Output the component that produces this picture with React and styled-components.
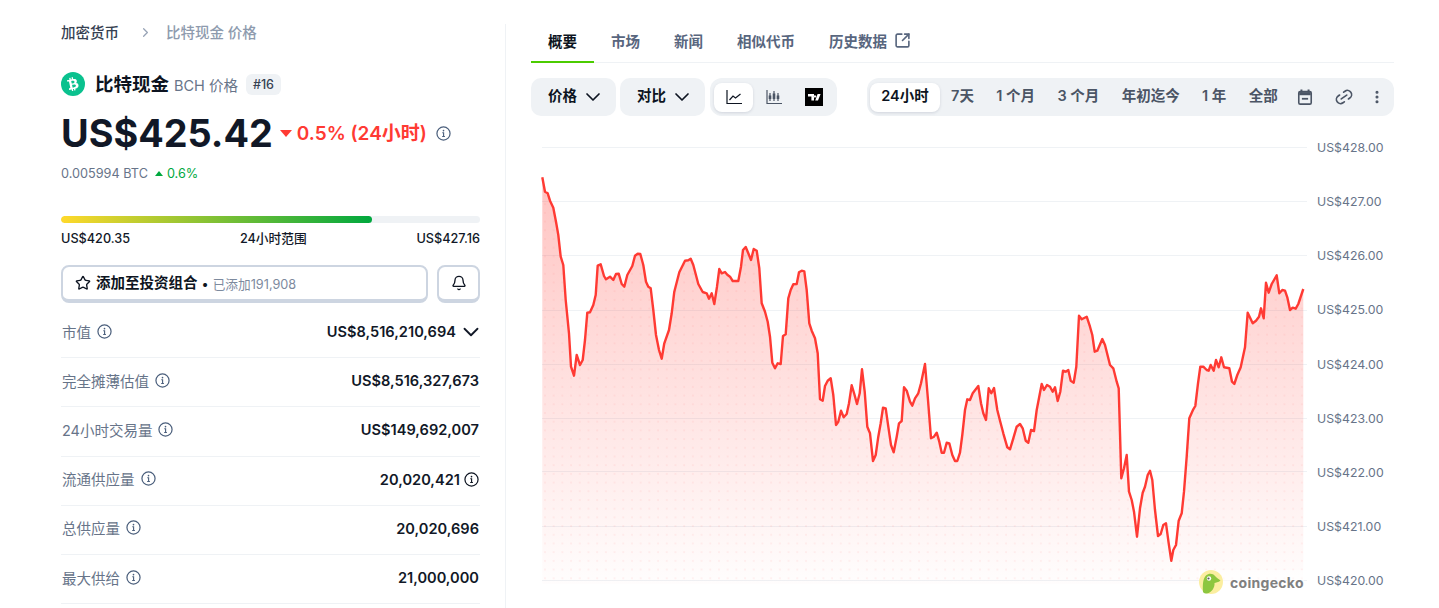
import React from "react";
import styled, { createGlobalStyle } from "styled-components";
import { Bell, ChevronDown, ChevronRight, Link2, MoreVertical, SquareArrowOutUpRight, Star } from "lucide-react";
import { FaBtc } from "react-icons/fa";

const GlobalStyle = createGlobalStyle`
  html, body {
    margin: 0;
    padding: 0;
    background: #fff;
    overflow: hidden;
  }
  body {
    font-family: Inter, "Noto Sans CJK SC", sans-serif;
    color: #0d1421;
  }
  * { box-sizing: border-box; }
`;

const Page = styled.div`
  height: 608px;
  padding: 24px 45px 0 61px;
  display: flex;
  overflow: hidden;
`;

const Sidebar = styled.aside`
  width: 445px;
  padding-right: 25px;
  border-right: 1px solid #eff2f5;
  flex-shrink: 0;
`;

const Main = styled.main`
  flex: 1;
  min-width: 0;
  padding-left: 25px;
`;

const Breadcrumb = styled.nav`
  display: flex;
  align-items: center;
  height: 16px;
  padding-bottom: 2px;
  font-size: 14.5px;
  font-weight: 500;
`;

const Crumb = styled.span`
  color: ${(p) => (p.$current ? "#8e9bae" : "#364152")};
`;

const CrumbSep = styled(ChevronRight)`
  width: 15px;
  height: 15px;
  margin: 2px 13px 0 19px;
  color: #97a3b6;
`;

const TitleRow = styled.div`
  display: flex;
  align-items: center;
  height: 24px;
  margin-top: 32px;
`;

const CoinLogo = styled.span`
  width: 24px;
  height: 24px;
  border-radius: 50%;
  background: #0ac18e;
  color: #fff;
  display: flex;
  align-items: center;
  justify-content: center;
  margin-right: 10px;

  svg {
    width: 12px;
    height: 14px;
    transform: rotate(-12deg);
  }
`;

const CoinName = styled.h1`
  margin: 0 0 2px;
  font-size: 18.5px;
  font-weight: 700;
  color: #0d1421;
`;

const CoinSymbol = styled.span`
  font-size: 14.5px;
  color: #677489;
  margin-left: 5px;
`;

const RankBadge = styled.span`
  font-size: 12.5px;
  font-weight: 500;
  color: #364152;
  background: #eff2f5;
  border-radius: 6px;
  padding: 2px 7px;
  line-height: 17px;
  margin-left: 8px;
`;

const PriceRow = styled.div`
  display: flex;
  align-items: center;
  height: 44px;
  margin-top: 15px;
`;

const Price = styled.span`
  font-size: 37.8px;
  font-weight: 700;
  color: #111827;
`;

const DownCaret = styled.span`
  width: 0;
  height: 0;
  margin: 0 5px 0 7px;
  border-left: 6px solid transparent;
  border-right: 6px solid transparent;
  border-top: 7px solid #ff3a33;
`;

const Change = styled.span`
  font-size: 19px;
  font-weight: 600;
  color: #ff3a33;
  margin: 0 9px 4px 0;
`;

const BtcRow = styled.div`
  display: flex;
  align-items: center;
  height: 20px;
  margin-top: 8px;
  font-size: 12.7px;
  color: #677489;
`;

const UpCaret = styled.span`
  width: 0;
  height: 0;
  margin: 0 4px 0 7px;
  border-left: 4px solid transparent;
  border-right: 4px solid transparent;
  border-bottom: 5px solid #00a83e;
`;

const BtcChange = styled.span`
  color: #00a83e;
`;

const RangeTrack = styled.div`
  height: 7px;
  margin-top: 33px;
  background: #eff2f5;
  border-radius: 4px;
  overflow: hidden;
`;

const RangeFill = styled.div`
  height: 100%;
  width: 74.2%;
  border-radius: 4px;
  background: linear-gradient(90deg, #ffd92b, #00a83e);
`;

const RangeLabels = styled.div`
  display: flex;
  justify-content: space-between;
  height: 16px;
  line-height: 16px;
  margin-top: 8px;
  font-size: 12.7px;
  font-weight: 500;
  color: #111827;
`;

const Actions = styled.div`
  display: flex;
  gap: 9px;
  margin-top: 18px;
`;

const OutlineButton = styled.button`
  height: 38px;
  padding: 0 ${(p) => (p.$square ? "0" : "12px")};
  width: ${(p) => (p.$square ? "43px" : "auto")};
  flex: ${(p) => (p.$square ? "none" : "1")};
  display: flex;
  align-items: center;
  justify-content: ${(p) => (p.$square ? "center" : "flex-start")};
  background: #fff;
  border: 2px solid #cdd5e1;
  border-bottom-width: 4px;
  border-radius: 8px;
  font-family: inherit;
  color: #0d1421;

  svg {
    width: 16px;
    height: 16px;
  }
`;

const AddText = styled.span`
  font-size: 14.5px;
  font-weight: 700;
  margin-left: 5px;
  padding-bottom: 3px;
`;

const AddCount = styled.span`
  font-size: 12.7px;
  color: #7d8a9e;
  margin-left: 4px;

  &::before {
    content: "•";
    color: #0d1421;
    margin-right: 4px;
  }
`;

const StatRow = styled.div`
  height: 49.2px;
  display: flex;
  align-items: center;
  justify-content: space-between;
  border-bottom: 1px solid #eff2f5;
  padding: 0 1px 2px;
  margin-top: ${(p) => (p.$first ? "6px" : "0")};
`;

const StatLabel = styled.span`
  display: flex;
  align-items: center;
  gap: 6px;
  padding-bottom: 2px;
  font-size: 14.5px;
  color: #677489;
`;

const StatValue = styled.span`
  display: flex;
  align-items: center;
  gap: 4px;
  font-size: 14.6px;
  font-weight: 600;
  color: #111827;
`;

const ValueChevron = styled(ChevronDown)`
  width: 26px;
  height: 26px;
  margin: 0 -5px 0 -2px;
  stroke-width: 1.7;
`;

const InfoSvg = styled.svg`
  width: 15px;
  height: 15px;
  flex-shrink: 0;
  color: ${(p) => p.$color || "#4b5f7c"};
`;

const InfoIcon = ({ color }) => (
  <InfoSvg viewBox="0 0 16 16" fill="none" $color={color}>
    <circle cx="8" cy="8" r="7" stroke="currentColor" strokeWidth="1.3" />
    <circle cx="8" cy="4.9" r="0.9" fill="currentColor" />
    <path d="M6.7 7.2H8.1V11M6.6 11.2H9.5" stroke="currentColor" strokeWidth="1.2" />
  </InfoSvg>
);

const Tabs = styled.div`
  display: flex;
  height: 39px;
  border-bottom: 1px solid #eff2f5;
`;

const Tab = styled.a`
  display: flex;
  align-items: center;
  gap: 7px;
  height: 39px;
  padding: 0 17px 4px;
  font-size: 14.5px;
  font-weight: 600;
  color: ${(p) => (p.$active ? "#0d1421" : "#58667e")};
  border-bottom: 2px solid ${(p) => (p.$active ? "#4bcc00" : "transparent")};

  svg {
    width: 17px;
    height: 17px;
    stroke-width: 2.3;
  }
`;

const Toolbar = styled.div`
  display: flex;
  margin-top: 15px;
`;

const SelectButton = styled.button`
  width: 85px;
  height: 38px;
  margin-right: 4px;
  padding: 0 0 6px;
  border: 0;
  border-radius: 10px;
  background: #eff2f5;
  display: flex;
  align-items: center;
  justify-content: center;
  gap: 10px;
  font-family: inherit;
  font-size: 14.5px;
  font-weight: 600;
  color: #0d1421;

  svg {
    width: 24px;
    height: 24px;
    margin: 6px -6px 0;
    stroke-width: 1.7;
  }
`;

const Segment = styled.div`
  height: 38px;
  padding: 4px;
  border-radius: 12px;
  background: #eff2f5;
  display: flex;
  align-items: center;
`;

const ChartSegment = styled(Segment)`
  width: 127px;
  margin-left: 1px;
  margin-right: 30px;
`;

const RangeSegment = styled(Segment)`
  flex: 1;
  padding-left: 3px;
`;

const SegmentItem = styled.button`
  height: 29px;
  padding: 0 11.2px 6px;
  border: 0;
  border-radius: 8px;
  background: ${(p) => (p.$active ? "#fff" : "transparent")};
  box-shadow: ${(p) => (p.$active ? "0 1px 3px rgba(88, 102, 126, 0.2)" : "none")};
  display: flex;
  align-items: center;
  justify-content: center;
  font-family: inherit;
  font-size: 14.5px;
  font-weight: 600;
  white-space: nowrap;
  color: ${(p) => (p.$active ? "#0d1421" : "#4b5565")};
`;

const GlyphButton = styled(SegmentItem)`
  padding: 0;
  width: ${(p) => p.$w};
  flex-shrink: 0;
`;

const ToolSvg = styled.svg`
  width: ${(p) => p.$size || "18px"};
  height: ${(p) => p.$size || "18px"};
`;

const LinkIcon = styled(Link2)`
  width: 20px;
  height: 20px;
  margin-left: 3px;
  transform: rotate(-35deg);
`;

const MoreIcon = styled(MoreVertical)`
  width: 16px;
  height: 16px;
  margin-left: 3px;
  stroke-width: 2.6;
`;

const ChartArea = styled.div`
  position: relative;
  display: flex;
  height: 449px;
  margin-top: 23px;
`;

const ChartSvg = styled.svg`
  width: 776px;
  height: 449px;
  flex-shrink: 0;
`;

const Axis = styled.div`
  flex: 1;
  padding-left: 10px;
  display: flex;
  flex-direction: column;
  justify-content: space-between;
`;

const AxisLabel = styled.span`
  height: 16px;
  line-height: 16px;
  font-size: 12.3px;
  padding-top: 1px;
  color: #677489;
`;

const Watermark = styled.div`
  position: absolute;
  left: 668px;
  top: 431px;
  display: flex;
  align-items: center;
  gap: 7px;
  background: rgba(255, 255, 255, 0.55);
`;

const GeckoSvg = styled.svg`
  width: 24px;
  height: 24px;
`;

const WatermarkText = styled.span`
  font-size: 14px;
  font-weight: 700;
  letter-spacing: 0.3px;
  color: #808080;
`;

const stats = [
  { label: "市值", value: "US$8,516,210,694", chevron: true },
  { label: "完全摊薄估值", value: "US$8,516,327,673" },
  { label: "24小时交易量", value: "US$149,692,007" },
  { label: "流通供应量", value: "20,020,421", info: true },
  { label: "总供应量", value: "20,020,696" },
  { label: "最大供给", value: "21,000,000" },
];

const axisLabels = ["428", "427", "426", "425", "424", "423", "422", "421", "420"];
const gridYs = [147, 201, 255, 310, 364, 418, 471, 526, 580];

// sampled off the reference, 3x scale, one list per crop
const samplesA = [
  22,112, 30,155, 38,160, 45,182, 55,203, 63,245, 70,285, 77,350, 85,375, 92,480, 102,580, 108,680,
  117,707, 125,645, 135,675, 143,660, 150,600, 157,518, 165,517, 175,495, 182,465, 188,377, 197,373,
  207,408, 213,418, 225,410, 235,420, 243,402, 251,401, 260,432, 268,440, 277,405, 292,378, 300,347,
  308,341, 316,342, 325,375, 333,425, 340,440, 347,445, 355,510, 363,585, 372,630, 380,656, 388,610,
  402,570, 410,520, 418,455, 433,397, 450,362, 460,361, 467,356, 475,375, 490,432, 503,456, 515,460,
  522,476, 530,460, 538,492, 546,440, 553,387, 560,400, 570,396, 577,404, 585,410, 593,423, 610,423,
  618,380, 624,330, 632,321, 640,340, 648,360, 656,327, 665,332, 673,385, 680,490, 690,515, 698,545,
  705,590, 712,668, 720,685, 728,670, 737,672, 744,588, 752,583, 760,475, 767,450, 775,433, 785,432,
  792,397, 800,392, 808,394, 815,450, 823,550, 830,572, 840,595, 848,640, 855,778, 863,782, 870,738,
  878,722, 887,715, 895,765, 903,855, 910,845, 918,812, 926,832, 935,822, 942,790, 950,736, 958,762,
  966,792, 974,760, 981,688, 989,755, 997,860, 1005,880, 1014,963, 1022,945, 1030,890, 1037,850,
  1044,803, 1052,805, 1060,860, 1068,915, 1076,937, 1085,890, 1092,850, 1100,843, 1107,742, 1115,752,
  1125,785, 1132,797, 1140,775, 1150,760, 1158,730, 1170,672,
];

const samplesB = [
  24,420, 33,535, 42,530, 50,518, 58,545, 65,578, 72,578, 80,548, 88,550, 97,585, 105,603, 112,603,
  120,578, 127,525, 135,450, 142,418, 150,420, 158,400, 175,378, 183,430, 190,460, 198,480, 206,385,
  214,400, 222,384, 232,450, 240,482, 250,520, 262,562, 270,568, 280,535, 290,500, 300,492, 308,505,
  317,542, 325,548, 333,510, 342,513, 350,450, 365,372, 372,390, 381,375, 390,380, 398,395, 405,382,
  413,423, 421,395, 429,332, 437,335, 445,330, 452,362, 461,368, 469,320, 477,167, 485,178, 500,170,
  510,200, 517,225, 524,275, 532,272, 547,237, 555,255, 570,315, 580,325, 590,365, 596,385, 600,520,
  604,655, 612,625, 620,585, 627,695, 635,720, 642,755, 651,830, 660,745, 668,698, 675,680, 683,645,
  690,632, 697,660, 705,750, 714,828, 722,822, 730,795, 738,790, 746,850, 754,902, 760,870, 768,855,
  776,782, 785,760, 792,695, 800,590, 808,475, 820,448, 826,438, 834,370, 841,320, 850,320, 860,330,
  866,332, 872,315, 881,332, 888,300, 896,322, 904,292, 912,322, 928,325, 936,365, 943,372, 952,345,
  962,322, 975,262, 983,158, 998,190, 1008,182, 1017,170, 1023,145, 1031,175, 1038,68, 1046,98, 1055,72,
  1070,46, 1078,100, 1087,90, 1095,92, 1102,112, 1110,150, 1118,143, 1127,146, 1135,132, 1150,87,
];

const toPoints = (list, ox, oy) => {
  const out = [];
  for (let i = 0; i < list.length; i += 2) {
    out.push(`${(ox + list[i] / 3).toFixed(1)},${(oy + list[i + 1] / 3).toFixed(1)}`);
  }
  return out;
};

const linePoints = [...toPoints(samplesA, 535, 140), ...toPoints(samplesB, 920, 260)];
const areaPoints = [...linePoints, "1303.3,584", "542.3,584"];

const PriceChart = () => (
  <ChartSvg viewBox="531 139 776 449">
    <defs>
      <linearGradient id="areaFade" x1="0" y1="177" x2="0" y2="584" gradientUnits="userSpaceOnUse">
        <stop offset="0" stopColor="#ff3a33" stopOpacity="0.3" />
        <stop offset="1" stopColor="#ff3a33" stopOpacity="0.01" />
      </linearGradient>
      <pattern id="areaDots" x="543" y="150" width="8.7" height="8.7" patternUnits="userSpaceOnUse">
        <circle cx="2" cy="2" r="1.1" fill="#ff3a33" fillOpacity="0.07" />
      </pattern>
    </defs>
    {gridYs.map((y) => (
      <line key={y} x1="542" x2="1307" y1={y + 0.5} y2={y + 0.5} stroke="#eff2f5" />
    ))}
    <polygon points={areaPoints.join(" ")} fill="url(#areaFade)" />
    <polygon points={areaPoints.join(" ")} fill="url(#areaDots)" />
    <polyline points={linePoints.join(" ")} fill="none" stroke="#ff3a33" strokeWidth="2.4" strokeLinejoin="round" />
  </ChartSvg>
);

const App = () => {
  return (
    <>
      <GlobalStyle />
      <Page>
        <Sidebar>
          <Breadcrumb>
            <Crumb>加密货币</Crumb>
            <CrumbSep />
            <Crumb $current>比特现金 价格</Crumb>
          </Breadcrumb>
          <TitleRow>
            <CoinLogo>
              <FaBtc />
            </CoinLogo>
            <CoinName>比特现金</CoinName>
            <CoinSymbol>BCH 价格</CoinSymbol>
            <RankBadge>#16</RankBadge>
          </TitleRow>
          <PriceRow>
            <Price>US$425.42</Price>
            <DownCaret />
            <Change>0.5% (24小时)</Change>
            <InfoIcon />
          </PriceRow>
          <BtcRow>
            0.005994 BTC
            <UpCaret />
            <BtcChange>0.6%</BtcChange>
          </BtcRow>
          <RangeTrack>
            <RangeFill />
          </RangeTrack>
          <RangeLabels>
            <span>US$420.35</span>
            <span>24小时范围</span>
            <span>US$427.16</span>
          </RangeLabels>
          <Actions>
            <OutlineButton>
              <Star />
              <AddText>添加至投资组合</AddText>
              <AddCount>已添加191,908</AddCount>
            </OutlineButton>
            <OutlineButton $square>
              <Bell />
            </OutlineButton>
          </Actions>
          {stats.map((s, i) => (
            <StatRow key={s.label} $first={i === 0}>
              <StatLabel>
                {s.label}
                <InfoIcon />
              </StatLabel>
              <StatValue>
                {s.value}
                {s.info && <InfoIcon color="#0d1421" />}
                {s.chevron && <ValueChevron />}
              </StatValue>
            </StatRow>
          ))}
        </Sidebar>
        <Main>
          <Tabs>
            <Tab $active>概要</Tab>
            <Tab>市场</Tab>
            <Tab>新闻</Tab>
            <Tab>相似代币</Tab>
            <Tab>
              历史数据
              <SquareArrowOutUpRight />
            </Tab>
          </Tabs>
          <Toolbar>
            <SelectButton>
              价格
              <ChevronDown />
            </SelectButton>
            <SelectButton>
              对比
              <ChevronDown />
            </SelectButton>
            <ChartSegment>
              <GlyphButton $active $w="39px">
                <ToolSvg viewBox="0 0 18 18" fill="none" stroke="#0d1421" strokeWidth="1.2">
                  <path d="M2 2V15.5H17" />
                  <path d="M4.5 12L8 8L10.5 10L15.5 6" />
                </ToolSvg>
              </GlyphButton>
              <GlyphButton $w="41px">
                <ToolSvg viewBox="0 0 18 18" fill="none" stroke="#4b5565" strokeWidth="1.2">
                  <path d="M2 2V15.5H17" />
                  <path d="M5 5V13M9 3V13M13 5V13" />
                  <path d="M5 7.5V11M9 5.5V11M13 7.5V11" strokeWidth="2.6" />
                </ToolSvg>
              </GlyphButton>
              <GlyphButton $w="39px">
                <ToolSvg viewBox="0 0 18 18">
                  <rect width="18" height="18" fill="#000" />
                  <path d="M3 6H9V12.5H6.4V8.4H3ZM10 7.2a1.2 1.2 0 1 0 0.01 0ZM12.6 6H15.6L13 12.5H10.2Z" fill="#fff" />
                </ToolSvg>
              </GlyphButton>
            </ChartSegment>
            <RangeSegment>
              <SegmentItem $active>24小时</SegmentItem>
              <SegmentItem>7天</SegmentItem>
              <SegmentItem>1 个月</SegmentItem>
              <SegmentItem>3 个月</SegmentItem>
              <SegmentItem>年初迄今</SegmentItem>
              <SegmentItem>1 年</SegmentItem>
              <SegmentItem>全部</SegmentItem>
              <GlyphButton $w="32px">
                <ToolSvg $size="16px" viewBox="0 0 18 18" fill="none">
                  <path d="M5 0.5V4M13 0.5V4" stroke="#4b5565" strokeWidth="2.2" />
                  <rect x="2" y="3" width="14" height="14" rx="1.6" stroke="#4b5565" strokeWidth="1.8" />
                  <path d="M2.5 3.5H15.5V7H2.5Z" fill="#4b5565" />
                  <path d="M5.5 11H12.5" stroke="#4b5565" strokeWidth="2" />
                </ToolSvg>
              </GlyphButton>
              <GlyphButton $w="44px">
                <LinkIcon color="#4b5565" />
              </GlyphButton>
              <GlyphButton $w="22px">
                <MoreIcon color="#4b5565" />
              </GlyphButton>
            </RangeSegment>
          </Toolbar>
          <ChartArea>
            <PriceChart />
            <Axis>
              {axisLabels.map((v) => (
                <AxisLabel key={v}>US${v}.00</AxisLabel>
              ))}
            </Axis>
            <Watermark>
              <GeckoSvg viewBox="0 0 24 24">
                <circle cx="12" cy="12" r="12" fill="#fbeea0" />
                <path
                  d="M4 22C3.5 15 4 8 7 5.5C10 3 14 3.5 16 6C17.5 8 20 9 21.5 10.5C19.5 12.5 16.5 12.5 15.5 13C16 17 13 22.5 8 23.5C6 23.5 4.8 23 4 22Z"
                  fill="#8dc63f"
                />
                <circle cx="10" cy="8.5" r="2.2" fill="#fff" />
                <circle cx="9.5" cy="8.5" r="1.1" fill="#58595b" />
              </GeckoSvg>
              <WatermarkText>coingecko</WatermarkText>
            </Watermark>
          </ChartArea>
        </Main>
      </Page>
    </>
  );
};

export default App;
